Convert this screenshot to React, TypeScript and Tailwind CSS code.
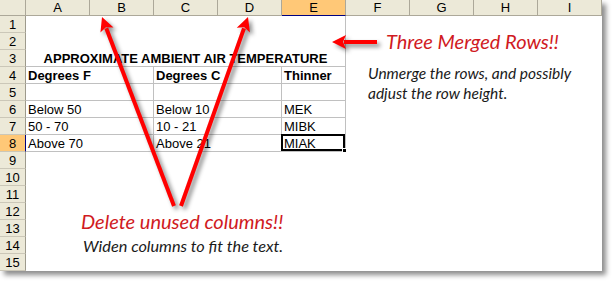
import React from "react";

type Cell = {
    span: string;
    text?: string;
    cls?: string;
    selected?: boolean;
};

const LINE = "border-[#c0c0c0]";

const rows: Cell[][] = [
    [{ span: "col-span-4" }, { span: "col-span-1", cls: `border-r ${LINE}` }, { span: "col-span-4" }],
    [{ span: "col-span-4" }, { span: "col-span-1", cls: `border-r ${LINE}` }, { span: "col-span-4" }],
    [
        { span: "col-span-5", text: "APPROXIMATE AMBIENT AIR TEMPERATURE", cls: `border-r border-b ${LINE} font-bold text-center` },
        { span: "col-span-4" },
    ],
    [
        { span: "col-span-2", text: "Degrees F", cls: `border-r border-b ${LINE} font-bold` },
        { span: "col-span-2", text: "Degrees C", cls: `border-r border-b ${LINE} font-bold` },
        { span: "col-span-1", text: "Thinner", cls: `border-r border-b ${LINE} font-bold` },
        { span: "col-span-4" },
    ],
    [
        { span: "col-span-2", cls: `border-r border-b ${LINE}` },
        { span: "col-span-2", cls: `border-r border-b ${LINE}` },
        { span: "col-span-1", cls: `border-r border-b ${LINE}` },
        { span: "col-span-4" },
    ],
    [
        { span: "col-span-2", text: "Below 50", cls: `border-r border-b ${LINE}` },
        { span: "col-span-2", text: "Below 10", cls: `border-r border-b ${LINE}` },
        { span: "col-span-1", text: "MEK", cls: `border-r border-b ${LINE}` },
        { span: "col-span-4" },
    ],
    [
        { span: "col-span-2", text: "50 - 70", cls: `border-r border-b ${LINE}` },
        { span: "col-span-2", text: "10 - 21", cls: `border-r border-b ${LINE}` },
        { span: "col-span-1", text: "MIBK", cls: `border-r border-b ${LINE}` },
        { span: "col-span-4" },
    ],
    [
        { span: "col-span-2", text: "Above 70", cls: `border-r border-b ${LINE}` },
        { span: "col-span-2", text: "Above 21", cls: `border-r border-b ${LINE}` },
        { span: "col-span-1", text: "MIAK", cls: `border-r border-b ${LINE}`, selected: true },
        { span: "col-span-4" },
    ],
    [{ span: "col-span-9" }],
    [{ span: "col-span-9" }],
    [{ span: "col-span-9" }],
    [{ span: "col-span-9" }],
    [{ span: "col-span-9" }],
    [{ span: "col-span-9" }],
    [{ span: "col-span-9" }],
];

const columns = ["A", "B", "C", "D", "E", "F", "G", "H", "I"];

function Arrow({ x1, y1, x2, y2, head = 14, half = 7 }: { x1: number; y1: number; x2: number; y2: number; head?: number; half?: number }) {
    // shaft from (x1,y1), head ends at the tip (x2,y2)
    const dx = x2 - x1;
    const dy = y2 - y1;
    const len = Math.sqrt(dx * dx + dy * dy);
    const ux = dx / len;
    const uy = dy / len;
    const bx = x2 - ux * head;
    const by = y2 - uy * head;
    const px = -uy;
    const py = ux;
    const pts = `${x2},${y2} ${bx + px * half},${by + py * half} ${bx + ux * 3},${by + uy * 3} ${bx - px * half},${by - py * half}`;
    return (
        <g>
            <line x1={x1} y1={y1} x2={bx + ux * 2} y2={by + uy * 2} stroke="#ff0000" strokeWidth={4} />
            <polygon points={pts} fill="#ff0000" />
        </g>
    );
}

export default function App() {
    return (
        <div className="relative w-[613px] h-[282px] bg-white overflow-hidden font-['Liberation_Sans',Arial,sans-serif] text-[13px] text-black">
            <div className="grid grid-cols-[26px_repeat(9,64px)] grid-rows-[16px_repeat(15,17px)] w-[602px] bg-white shadow-[4px_4px_5px_rgba(0,0,0,0.45)]">
                <div className="bg-[#ece9d8] border-r border-b border-[#aca899]" />
                {columns.map((c) =>
                    c === "E" ? (
                        <div key={c} className="bg-[#ffc877] border-r border-[#aca899] border-b border-b-[#000080] flex items-center justify-center leading-none">
                            {c}
                        </div>
                    ) : (
                        <div key={c} className="bg-[#ece9d8] border-r border-b border-[#aca899] flex items-center justify-center leading-none">
                            {c}
                        </div>
                    )
                )}
                {rows.map((row, i) => (
                    <React.Fragment key={i}>
                        {i === 7 ? (
                            <div className="bg-[#ffc877] border-b border-b-[#cbc7b8] border-r border-r-[#000080] flex items-center justify-center leading-none">
                                {i + 1}
                            </div>
                        ) : (
                            <div className="bg-[#ece9d8] border-b border-b-[#cbc7b8] border-r border-r-[#9d9a8c] flex items-center justify-center leading-none">
                                {i + 1}
                            </div>
                        )}
                        {row.map((cell, j) => (
                            <div key={j} className={`${cell.span} ${cell.cls ?? ""} relative px-[2px] leading-[17px] whitespace-nowrap`}>
                                {cell.text}
                                {cell.selected && (
                                    <>
                                        <div className="absolute -left-[1px] -top-[1px] right-[0px] bottom-[0px] border-2 border-black" />
                                        <div className="absolute -right-[2px] -bottom-[2px] w-[5px] h-[5px] bg-black border border-white" />
                                    </>
                                )}
                            </div>
                        ))}
                    </React.Fragment>
                ))}
            </div>

            <svg className="absolute inset-0 drop-shadow-[3px_3px_2px_rgba(0,0,0,0.45)]" width={613} height={282}>
                <Arrow x1={174} y1={206} x2={102} y2={17} />
                <Arrow x1={181} y1={206} x2={248} y2={17} />
                <Arrow x1={377} y1={42} x2={332} y2={42} />
            </svg>

            <div className="absolute left-[368px] top-[29px] flex flex-col font-['Lato',sans-serif] italic">
                <span className="pl-[18px] text-[20px] leading-[24px] text-[#d01a22]">Three Merged Rows!!</span>
                <span className="mt-[10px] text-[15.5px] leading-[20px] text-[#1a1a1a]">
                    Unmerge the rows, and possibly
                    <br />
                    adjust the row height.
                </span>
            </div>
            <div className="absolute left-[81px] top-[209px] flex flex-col font-['Lato',sans-serif] italic">
                <span className="text-[20px] leading-[24px] text-[#d01a22]">Delete unused columns!!</span>
                <span className="pl-[2px] mt-[3px] text-[16.3px] leading-[20px] text-[#1a1a1a]">Widen columns to fit the text.</span>
            </div>
        </div>
    );
}
